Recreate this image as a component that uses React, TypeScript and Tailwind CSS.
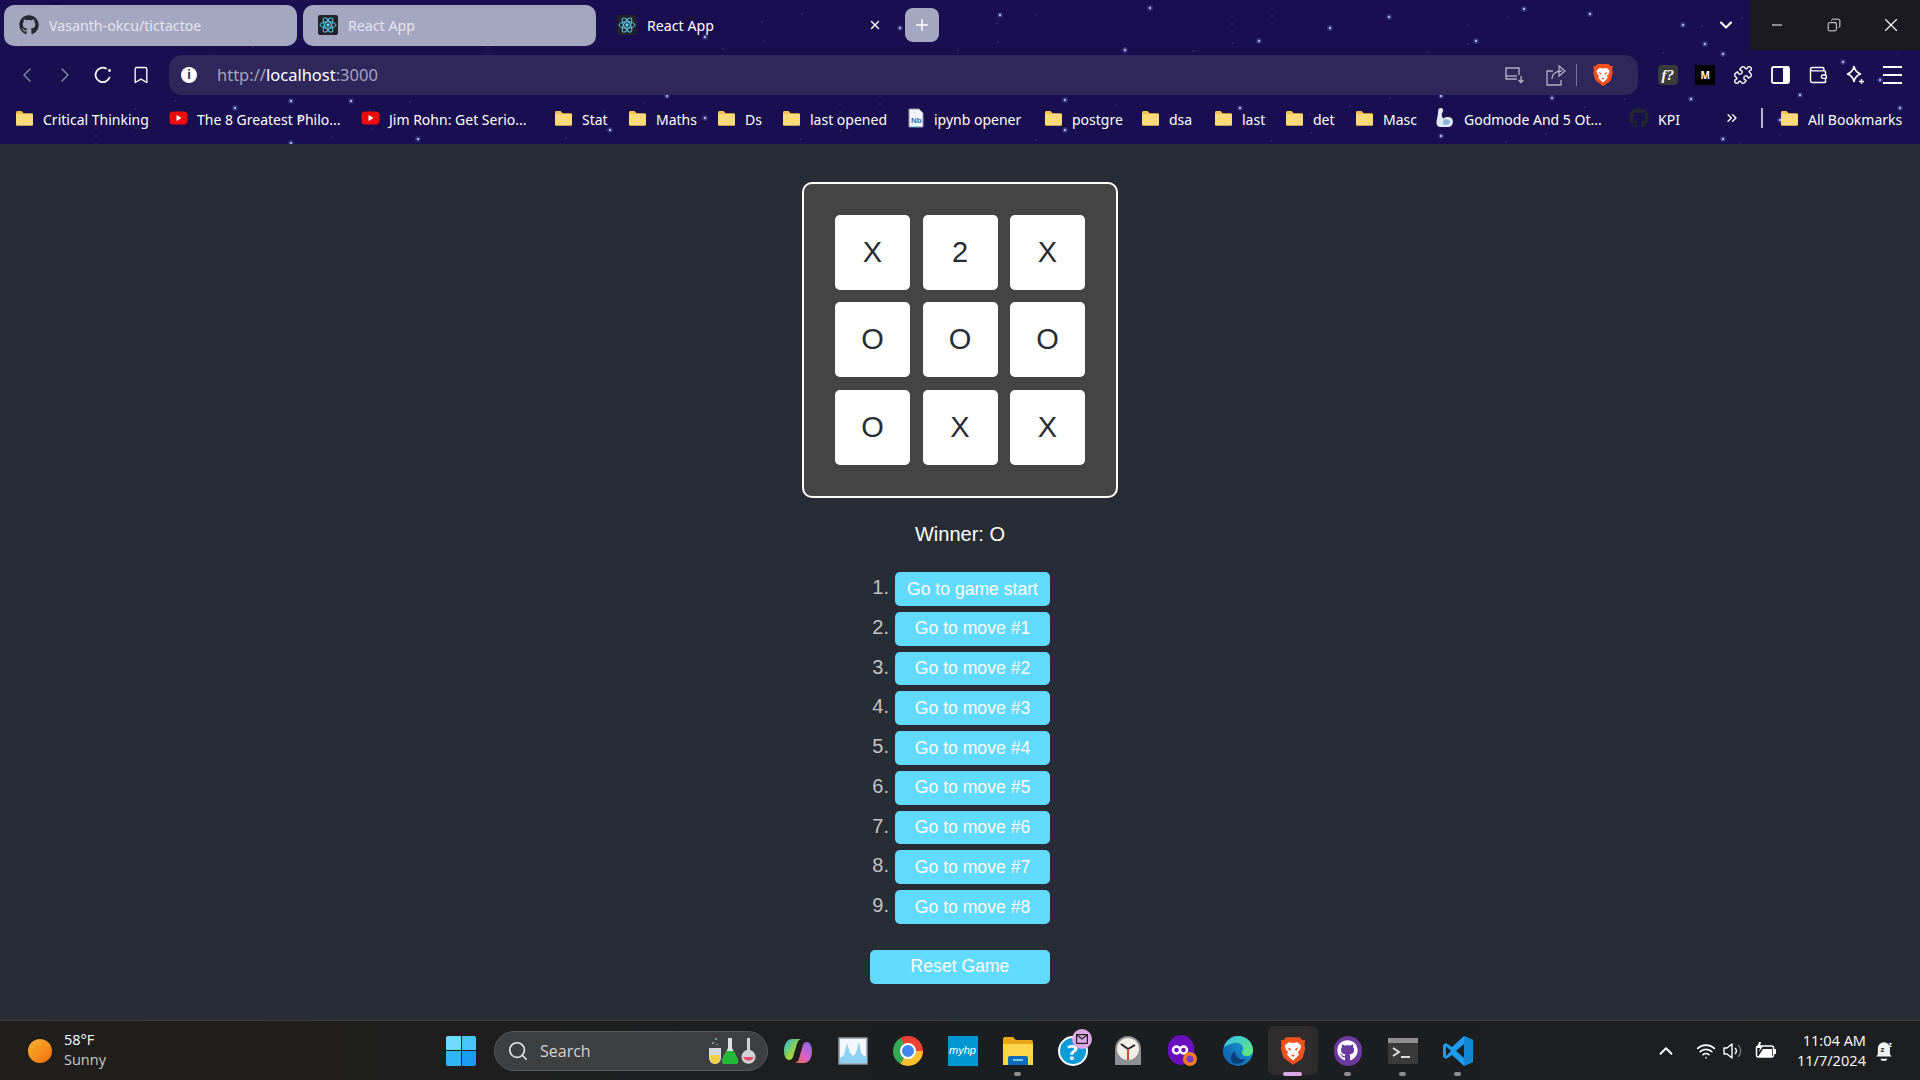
import { Bookmark, ChevronDown, ChevronLeft, ChevronRight, ChevronUp, ChevronsRight, Copy, Minus, Plus, Puzzle, Search, Wallet, Wifi, X } from "lucide-react";
import { FaGithub } from "react-icons/fa";

const BOARD = ["X", "2", "X", "O", "O", "O", "O", "X", "X"];
const MOVES = ["Go to game start", "Go to move #1", "Go to move #2", "Go to move #3", "Go to move #4", "Go to move #5", "Go to move #6", "Go to move #7", "Go to move #8"];

// star field behind the browser chrome
const BRIGHT = [[1389, 17], [1259, 41], [1476, 41], [1125, 50], [1723, 54], [1683, 25], [1524, 9], [351, 101], [291, 143], [291, 101], [418, 139], [485, 20], [705, 37], [705, 118], [667, 96], [1065, 130], [1065, 100], [1441, 96], [1441, 136], [1691, 99], [1723, 139], [1843, 62], [1800, 95], [1880, 80], [1705, 44], [1590, 14], [1150, 8], [900, 28], [1240, 108], [1552, 98], [1780, 120], [1900, 108], [235, 108], [1000, 15], [1330, 28], [610, 130], [300, 118], [1150, 120]];
const FAINT = Array.from({ length: 90 }, (_, i) => [(i * 431 + 97) % 1920, (i * 173 + 11) % 144]);

function Stars() {
  return (
    <svg className="absolute inset-0" width="1920" height="144" viewBox="0 0 1920 144">
      {FAINT.map(([x, y], i) => <circle key={i} cx={x} cy={y} r="0.8" fill="#5f64a0" opacity="0.5" />)}
      {BRIGHT.map(([x, y], i) => (
        <g key={i}>
          <circle cx={x} cy={y} r="3" fill="#6f7ac4" opacity="0.3" />
          <circle cx={x} cy={y} r="1.2" fill="#aeb8e6" />
        </g>
      ))}
    </svg>
  );
}

function ReactIcon({ size = 20 }: { size?: number }) {
  return (
    <svg width={size} height={size} viewBox="0 0 20 20" className="shrink-0">
      <rect width="20" height="20" rx="2" fill="#20232a" />
      <g fill="none" stroke="#61dafb" strokeWidth="0.9">
        <ellipse cx="10" cy="10" rx="8" ry="3.2" />
        <ellipse cx="10" cy="10" rx="8" ry="3.2" transform="rotate(60 10 10)" />
        <ellipse cx="10" cy="10" rx="8" ry="3.2" transform="rotate(120 10 10)" />
      </g>
      <circle cx="10" cy="10" r="1.7" fill="#61dafb" />
    </svg>
  );
}

function Folder() {
  return (
    <svg width="19" height="18" viewBox="0 0 19 18" className="shrink-0">
      <path d="M1 3.5C1 2.7 1.6 2 2.4 2h4.2l2 2.2h8c.8 0 1.4.6 1.4 1.4v9.6c0 .8-.6 1.4-1.4 1.4H2.400C1.600 16.600 1 16 1 15.200z" fill="#f2c14e" />
      <path d="M1 6c0-.6.5-1 1-1h15c.6 0 1 .4 1 1v9.200c0 .8-.6 1.400-1.400 1.400H2.400C1.600 16.600 1 16 1 15.200z" fill="#fbdb79" />
    </svg>
  );
}

function Youtube() {
  return (
    <svg width="19" height="18" viewBox="0 0 19 18" className="shrink-0">
      <rect x="0.5" y="2.5" width="18" height="13" rx="3.5" fill="#f00b0b" />
      <path d="M7.5 6l5 3-5 3z" fill="#fff" />
    </svg>
  );
}

function Notebook() {
  return (
    <svg width="18" height="20" viewBox="0 0 18 20" className="shrink-0">
      <path d="M2 1h10l4 4v14H2z" fill="#f4f6fb" stroke="#8d94ad" />
      <text x="4" y="15" fontSize="8" fontWeight="700" fill="#3a6fb0" fontFamily="Liberation Sans, sans-serif">Nb</text>
    </svg>
  );
}

function ArmIcon() {
  return (
    <svg width="20" height="22" viewBox="0 0 22 24" className="shrink-0">
      <path d="M6 1c2 0 3 1 3 2.500S7.500 6 7.500 8c0 2 .5 3.500 1.500 4.500 2-2 7-2.500 9.500 0 2.500 3 1 8.500-3 9.500H6C2 22 1 18 2 14c.8-3.500 1.500-8 1.500-10C3.500 2 4.500 1 6 1z" fill="#dfe7f2" />
      <path d="M9 14c3-1.500 7-.5 8 2-1 3-5 4-8 3z" fill="#8fb4d9" />
    </svg>
  );
}

function BraveIcon({ size = 24 }: { size?: number }) {
  return (
    <svg width={size} height={size} viewBox="0 0 24 24" className="shrink-0">
      <path d="M6.500 1h11l2 2.300 2.200-.2-.6 4.500.7 1.900-1.600 6.500c-.3 1.200-1 2.200-2 2.900L12 23l-6.200-4.600c-1-.7-1.700-1.700-2-2.900L2.200 9.500l.7-1.900-.6-4.500 2.200.2z" fill="#f4511e" />
      <path d="M12 5.500l3.500-.5 3 2.500-.8 3.500-1.700 1.500.7 2.500-2.200 2.300L12 19.500l-2.500-2.200-2.200-2.300.7-2.500L6.300 11l-.8-3.500 3-2.500z" fill="#fff" />
      <path d="M7.500 9l3 1.300-1 1.700zM16.500 9l-3 1.300 1 1.700z" fill="#f4511e" />
      <path d="M10.300 15h3.400L12 16.800z" fill="#f4511e" />
    </svg>
  );
}

function BookmarkItem({ icon, label, className }: { icon: React.ReactNode; label: string; className: string }) {
  return (
    <div className={`flex shrink-0 items-center gap-[9px] ${className}`}>
      {icon}
      <span className="translate-y-px whitespace-nowrap text-[14px] text-white">{label}</span>
    </div>
  );
}

function Browser() {
  return (
    <header className="relative h-[144px] shrink-0 overflow-hidden bg-[#180e50] font-['Noto_Sans',sans-serif]">
      <Stars />
      <div className="relative flex flex-col">
        {/* tab strip */}
        <div className="flex h-[50px] items-center">
          <div className="ml-[4px] flex h-[41px] w-[293px] items-center gap-[10px] rounded-[10px] bg-[#a5a7c1] pl-[15px]">
            <FaGithub size={20} className="shrink-0 text-[#25282e]" />
            <span className="translate-y-px text-[14.2px] text-[#e4e4ee]">Vasanth-okcu/tictactoe</span>
          </div>
          <div className="ml-[6px] flex h-[41px] w-[293px] items-center gap-[10px] rounded-[10px] bg-[#a5a7c1] pl-[15px]">
            <ReactIcon />
            <span className="translate-y-px text-[14.2px] text-[#e4e4ee]">React App</span>
          </div>
          <div className="ml-[21px] flex w-[265px] items-center gap-[10px]">
            <ReactIcon />
            <span className="translate-y-px text-[14.2px] text-white">React App</span>
            <X size={14} strokeWidth={2.5} className="ml-auto text-white" />
          </div>
          <div className="ml-[23px] flex h-[34px] w-[34px] items-center justify-center rounded-[8px] bg-[#a5a7c1]">
            <Plus size={18} className="text-white" />
          </div>
          <ChevronDown size={20} strokeWidth={2.5} className="ml-auto text-white" />
          <div className="ml-[14px] flex h-[50px] w-[170px] items-center bg-[#1b1a20] text-white">
            <div className="flex w-[54px] justify-center"><Minus size={16} strokeWidth={1.5} /></div>
            <div className="flex w-[59px] justify-center"><Copy size={14} strokeWidth={1.5} className="-scale-x-100" /></div>
            <div className="flex w-[56px] justify-center"><X size={22} strokeWidth={1.2} /></div>
          </div>
        </div>

        {/* address bar */}
        <div className="mt-[5px] flex h-[40px] items-center pl-[8px]">
          <div className="flex w-[38px] justify-center"><ChevronLeft size={24} strokeWidth={1.4} className="text-[#8b8aa8]" /></div>
          <div className="flex w-[38px] justify-center"><ChevronRight size={24} strokeWidth={1.4} className="text-[#8b8aa8]" /></div>
          <div className="flex w-[38px] justify-center">
            <svg width="20" height="20" viewBox="0 0 20 20" fill="none" stroke="#fff" strokeWidth="1.8" strokeLinecap="round">
              <path d="M16.500 12.500A7.200 7.200 0 1 1 13 3.500" />
              <circle cx="16.500" cy="5.500" r="1.400" fill="#fff" stroke="none" />
            </svg>
          </div>
          <div className="flex w-[38px] justify-center"><Bookmark size={20} strokeWidth={1.6} className="text-white" /></div>
          <div className="ml-[9px] flex h-[40px] w-[1469px] items-center rounded-[13px] bg-[#2f2759] pl-[12px] pr-[23px]">
            <div className="flex h-[16px] w-[16px] items-center justify-center rounded-full bg-white">
              <span className="text-[12px] font-bold leading-none text-[#2f2759]">i</span>
            </div>
            <div className="ml-[20px] text-[16.5px] text-[#a6a3c2]">http://<span className="text-white">localhost</span>:3000</div>
            <svg width="22" height="20" viewBox="0 0 22 20" fill="none" stroke="#b0aec6" strokeWidth="1.4" className="ml-auto">
              <path d="M14 14H3V3h13v7" />
              <path d="M3 11h11" />
              <path d="M18 11v6M15.500 15l2.500 2.500 2.500-2.500" />
            </svg>
            <svg width="22" height="22" viewBox="0 0 22 22" fill="none" stroke="#b0aec6" strokeWidth="1.3" className="ml-[20px]">
              <path d="M8 7H2v14h14v-5" />
              <path d="M7 15c0-5 4-8 10-8" />
              <path d="M14 2l6 5-6 5z" />
            </svg>
            <div className="ml-[9px] h-[22px] w-px bg-[#77749a]" />
            <div className="ml-[14px]"><BraveIcon /></div>
          </div>
          <div className="ml-[11px] flex items-center">
            <div className="flex w-[37.5px] justify-center">
              <div className="flex h-[20px] w-[20px] items-center justify-center rounded-[4px] bg-[#3a3a3a] font-['Liberation_Serif',serif] text-[15px] font-bold italic text-white">f?</div>
            </div>
            <div className="flex w-[37.5px] justify-center">
              <div className="flex h-[20px] w-[20px] items-center justify-center bg-black text-[10px] font-bold text-white">M</div>
            </div>
            <div className="flex w-[37.5px] justify-center"><Puzzle size={20} strokeWidth={1.7} className="text-white" /></div>
            <div className="flex w-[37.5px] justify-center">
              <svg width="19" height="18" viewBox="0 0 19 18">
                <rect x="1" y="1" width="17" height="16" rx="1.500" fill="none" stroke="#fff" strokeWidth="1.800" />
                <rect x="12" y="1" width="6" height="16" fill="#fff" />
              </svg>
            </div>
            <div className="flex w-[37.5px] justify-center"><Wallet size={20} strokeWidth={1.7} className="text-white" /></div>
            <div className="flex w-[37.5px] justify-center">
              <svg width="20" height="20" viewBox="0 0 20 20" fill="none" stroke="#fff" strokeWidth="1.600">
                <path d="M9 1.500c.8 3.500 2.500 6 6.500 7.500-4 1.500-5.700 4-6.500 7.500C8.200 13 6.500 10.500 2.500 9 6.500 7.500 8.200 5 9 1.500z" strokeLinejoin="round" />
                <path d="M16.500 14v5M14 16.500h5" strokeWidth="1.300" />
              </svg>
            </div>
            <div className="flex w-[37.5px] justify-center">
              <div className="flex w-[19px] flex-col gap-[6px]">
                <div className="h-[2px] bg-white" /><div className="h-[2px] bg-white" /><div className="h-[2px] bg-white" />
              </div>
            </div>
          </div>
        </div>

        {/* bookmarks */}
        <div className="flex h-[46px] items-center pl-[15px]">
          <BookmarkItem className="w-[154px]" icon={<Folder />} label="Critical Thinking" />
          <BookmarkItem className="w-[192px]" icon={<Youtube />} label="The 8 Greatest Philo..." />
          <BookmarkItem className="w-[193px]" icon={<Youtube />} label="Jim Rohn: Get Serio..." />
          <BookmarkItem className="w-[74px]" icon={<Folder />} label="Stat" />
          <BookmarkItem className="w-[89px]" icon={<Folder />} label="Maths" />
          <BookmarkItem className="w-[65px]" icon={<Folder />} label="Ds" />
          <BookmarkItem className="w-[125px]" icon={<Folder />} label="last opened" />
          <BookmarkItem className="w-[137px]" icon={<Notebook />} label="ipynb opener" />
          <BookmarkItem className="w-[97px]" icon={<Folder />} label="postgre" />
          <BookmarkItem className="w-[73px]" icon={<Folder />} label="dsa" />
          <BookmarkItem className="w-[71px]" icon={<Folder />} label="last" />
          <BookmarkItem className="w-[70px]" icon={<Folder />} label="det" />
          <BookmarkItem className="w-[80px]" icon={<Folder />} label="Masc" />
          <BookmarkItem className="w-[194px]" icon={<ArmIcon />} label="Godmode And 5 Ot..." />
          <BookmarkItem className="w-[95px] gap-[7px]" icon={<FaGithub size={20} className="shrink-0 text-[#24262c]" />} label="KPI" />
          <ChevronsRight size={16} className="shrink-0 text-white" />
          <div className="ml-[21px] h-[20px] w-[2px] shrink-0 bg-[#b9b8d2]" />
          <BookmarkItem className="ml-[17px]" icon={<Folder />} label="All Bookmarks" />
        </div>
      </div>
    </header>
  );
}

function Game() {
  return (
    <main className="flex flex-1 flex-col items-center bg-[#282c34] pt-[38px] font-['Liberation_Sans',sans-serif]">
      <div className="box-border grid h-[316px] w-[316px] grid-cols-[75px_75px_75px] grid-rows-[75px_75px_75px] gap-[12.5px] rounded-[10px] border-2 border-white bg-[#444444] px-[31px] pt-[30.75px]">
        {BOARD.map((v, i) => (
          <div key={i} className="flex items-center justify-center rounded-[5px] bg-white text-[29px] text-[#282c34]">{v}</div>
        ))}
      </div>
      <p className="mt-[25px] text-[20px] leading-[23px] text-white">Winner: O</p>
      <ol className="mt-[26px] flex w-[180px] flex-col gap-[6px]">
        {MOVES.map((m, i) => (
          <li key={m} className="flex gap-[6px]">
            <span className="w-[19px] -translate-y-px text-right text-[20px] leading-[32px] text-[#c4c4c4]">{i + 1}.</span>
            <button className="flex h-[33.75px] w-[155px] items-center justify-center rounded-[5px] bg-[#61dafb] text-[17.6px] text-white">{m}</button>
          </li>
        ))}
      </ol>
      <button className="mt-[26px] flex h-[34px] w-[180px] items-center justify-center rounded-[5px] bg-[#61dafb] pb-[2px] text-[17.6px] text-white">Reset Game</button>
    </main>
  );
}

function Slot({ children, dot }: { children: React.ReactNode; dot?: boolean }) {
  return (
    <div className="relative flex h-[60px] w-[55px] items-center justify-center">
      {children}
      {dot && <div className="absolute bottom-[5px] h-[4px] w-[7px] rounded-full bg-[#8e8e8e]" />}
    </div>
  );
}

function Taskbar() {
  return (
    <footer className="flex h-[60px] shrink-0 items-center border-t border-[#3a3b3d] bg-gradient-to-r from-[#211e1c] via-[#1b1e20] to-[#1c1e20] font-['Open_Sans',sans-serif] text-white">
      <div className="flex w-[446px] items-center pl-[28px]">
        <div className="h-[24px] w-[24px] rounded-full bg-gradient-to-br from-[#f5b52c] to-[#f36a0a]" />
        <div className="ml-[12px] -translate-y-px text-[14.5px] leading-[20px]">
          <div>58°F</div>
          <div className="text-[#c9c9c9]">Sunny</div>
        </div>
      </div>
      <div className="grid h-[30px] w-[30px] grid-cols-2 gap-[1px]">
        <div className="rounded-tl-[2px] bg-[#6fdcfd]" /><div className="rounded-tr-[2px] bg-[#48c6fb]" />
        <div className="rounded-bl-[2px] bg-[#30b5f8]" /><div className="rounded-br-[2px] bg-[#1a9cf1]" />
      </div>
      <div className="ml-[18px] flex h-[40px] w-[274px] items-center rounded-full border border-[#555] bg-[#3d3f40] pl-[12px] pr-[11px]">
        <Search size={22} strokeWidth={1.8} className="text-[#e6e6e6]" />
        <span className="ml-[11px] text-[16px] text-[#d4d4d4]">Search</span>
        <svg width="48" height="28" viewBox="0 0 48 28" className="ml-auto">
          <path d="M8 1v2M5 5v2M9 7v1" stroke="#9fd0e6" strokeWidth="1.200" />
          <path d="M1 11h12v10a6 6 0 0 1-12 0z" fill="#d7d9dc" /><path d="M2 18h10v4a5 5 0 0 1-10 0z" fill="#f2cf45" />
          <path d="M20 1h4v10l6 12a3 3 0 0 1-3 4H17a3 3 0 0 1-3-4l6-12z" fill="#dcdfe0" /><path d="M18 14h8l4 9a3 3 0 0 1-3 4H17a3 3 0 0 1-3-4z" fill="#22b83a" />
          <path d="M39 1h3v12a7 7 0 1 1-3 0z" fill="#cfd3d6" /><path d="M35 20a6 6 0 0 0 11 0z" fill="#ef4a6b" />
        </svg>
      </div>
      <div className="ml-[2px] flex">
        <Slot>
          <svg width="30" height="30" viewBox="0 0 30 30">
            <defs>
              <linearGradient id="cp1" x1="0" y1="0" x2="1" y2="1"><stop offset="0" stopColor="#1fb6e8" /><stop offset="0.5" stopColor="#8fd14f" /><stop offset="1" stopColor="#f6c63b" /></linearGradient>
              <linearGradient id="cp2" x1="1" y1="0" x2="0" y2="1"><stop offset="0" stopColor="#7a6be8" /><stop offset="0.5" stopColor="#d45fd0" /><stop offset="1" stopColor="#f0703c" /></linearGradient>
            </defs>
            <path d="M9 3h9c-3 1-4 4-5 8l-3 10c-.700 2-2 3-4 3-3 0-5-4-5-9C1 8 4 3 9 3z" fill="url(#cp1)" />
            <path d="M21 27h-9c3-1 4-4 5-8l3-10c.700-2 2-3 4-3 3 0 5 4 5 9 0 7-3 12-8 12z" fill="url(#cp2)" />
          </svg>
        </Slot>
        <Slot>
          <svg width="30" height="28" viewBox="0 0 30 28">
            <rect x="1" y="1" width="28" height="26" fill="#f2f8fc" stroke="#8a97a6" strokeWidth="1.500" />
            <path d="M2 26V21l4-3 3-12 3 10 3 3 3-3 3-11 2 11 3 3 3 1v6z" fill="#8fd0f5" />
          </svg>
        </Slot>
        <Slot>
          <div className="h-[30px] w-[30px] rounded-full bg-[conic-gradient(from_-30deg,#ea4335_0_120deg,#fbc02d_120deg_240deg,#34a853_240deg_360deg)] p-[7px]">
            <div className="h-full w-full rounded-full border-[2px] border-white bg-[#3f86ee]" />
          </div>
        </Slot>
        <Slot>
          <div className="flex h-[30px] w-[30px] items-center justify-center bg-[#0096d6] font-['Liberation_Sans',sans-serif] text-[11px] italic text-white">myhp</div>
        </Slot>
        <Slot dot>
          <svg width="30" height="28" viewBox="0 0 30 28">
            <path d="M0 2a2 2 0 0 1 2-2h8l3 3h15a2 2 0 0 1 2 2v4H0z" fill="#e8a817" />
            <path d="M0 7h30v21H0z" fill="#ffd54a" />
            <path d="M5 28V21a2 2 0 0 1 2-2h16a2 2 0 0 1 2 2v7z" fill="#0f6cbd" />
            <path d="M10 23h10" stroke="#7fc4ef" strokeWidth="2" />
          </svg>
        </Slot>
        <Slot>
          <div className="relative flex h-[30px] w-[30px] items-center justify-center rounded-full border-[2px] border-white bg-[#0f9bd8] text-[22px] font-bold leading-none text-white">
            ?
            <div className="absolute -right-[6px] -top-[9px] flex h-[20px] w-[20px] items-center justify-center rounded-full bg-[#dba8e4]">
              <svg width="12" height="10" viewBox="0 0 12 10" fill="none" stroke="#222" strokeWidth="1.200"><rect x="0.600" y="0.600" width="10.800" height="8.800" /><path d="M1 1l5 4 5-4" /></svg>
            </div>
          </div>
        </Slot>
        <Slot>
          <svg width="30" height="32" viewBox="0 0 30 32">
            <path d="M2 30V14a13 13 0 0 1 26 0v16z" fill="#8c8f93" />
            <circle cx="15" cy="14" r="11" fill="#f2f0e6" />
            <path d="M15 14L8 9M15 14l7-4" stroke="#222" strokeWidth="2" />
            <path d="M15 14v11" stroke="#d8452e" strokeWidth="2" />
          </svg>
        </Slot>
        <Slot>
          <svg width="30" height="32" viewBox="0 0 30 32">
            <ellipse cx="13" cy="15" rx="13.500" ry="15" fill="#6a0fc0" />
            <path d="M5 15a3.500 3.500 0 0 1 7 0 3.500 3.500 0 0 1 7 0 3.500 3.500 0 0 1-7 0 3.500 3.500 0 0 1-7 0z" fill="none" stroke="#fff" strokeWidth="2.500" />
            <circle cx="22" cy="24" r="7" fill="#f57c22" /><circle cx="22" cy="24" r="3.500" fill="#7b3fc4" />
          </svg>
        </Slot>
        <Slot>
          <svg width="30" height="30" viewBox="0 0 30 30">
            <defs>
              <linearGradient id="ed1" x1="0" y1="1" x2="1" y2="0"><stop offset="0" stopColor="#0c59a4" /><stop offset="1" stopColor="#1fa4dc" /></linearGradient>
              <linearGradient id="ed2" x1="0" y1="0" x2="1" y2="1"><stop offset="0" stopColor="#35c1f1" /><stop offset="1" stopColor="#66eb6e" /></linearGradient>
            </defs>
            <circle cx="15" cy="15" r="15" fill="url(#ed1)" />
            <path d="M1 11C3 4 9 0 15 0c8 0 15 6 15 14 0 4-3 6-6 6-3 0-5-1-5-3 0-3 2-3 1-6-1-3-5-5-9-4-4 1-7 2-10 4z" fill="url(#ed2)" />
            <path d="M12 15c0 6 5 10 11 8-3 4-8 6-13 4-3-3-3-9 2-12z" fill="#0a3f7a" />
          </svg>
        </Slot>
        <div className="relative flex h-[60px] w-[55px] items-center justify-center">
          <div className="absolute right-[2px] top-[5px] h-[49px] w-[44px] rounded-[6px] bg-[#2b2a2b]" />
          <div className="absolute left-[3px] top-[5px] h-[49px] w-[44px] rounded-[6px] bg-[#302c2d]" />
          <div className="relative"><BraveIcon size={30} /></div>
          <div className="absolute bottom-[5px] h-[4px] w-[19px] rounded-full bg-[#dba8e4]" />
        </div>
        <Slot dot>
          <div className="flex h-[30px] w-[28px] items-center justify-center rounded-full bg-[#6b3a9e] text-white"><FaGithub size={21} /></div>
        </Slot>
        <Slot dot>
          <svg width="30" height="26" viewBox="0 0 30 26">
            <rect width="30" height="26" rx="2" fill="#3a3a3a" />
            <rect width="30" height="5" fill="#8f8f8f" />
            <path d="M5 10l6 4-6 4" fill="none" stroke="#ddd" strokeWidth="2" />
            <path d="M13 19h9" stroke="#ddd" strokeWidth="2" />
          </svg>
        </Slot>
        <Slot dot>
          <svg width="30" height="30" viewBox="0 0 30 30">
            <path d="M21 0l9 4v22l-9 4-12-11-6 4-3-2v-12l3-2 6 4z" fill="#1f9cf0" />
            <path d="M21 0l9 4v22l-9 4z" fill="#1585d6" />
            <path d="M21 8l-8 7 8 7z" fill="#1c1e20" />
            <path d="M3 10l5 5-5 5z" fill="#1c1e20" />
          </svg>
        </Slot>
      </div>
      <ChevronUp size={22} strokeWidth={2} className="ml-[170px] text-white" />
      <Wifi size={20} strokeWidth={2} className="ml-[19px] text-white" />
      <svg width="22" height="20" viewBox="0 0 22 20" fill="none" strokeWidth="1.400" className="ml-[7px]">
        <path d="M1 7v6h3l5 4V3L4 7z" stroke="#fff" strokeLinejoin="round" />
        <path d="M12 7a4 4 0 0 1 0 6" stroke="#fff" />
        <path d="M15 4a8 8 0 0 1 0 12" stroke="#777" />
      </svg>
      <svg width="22" height="18" viewBox="0 0 22 18" fill="none" className="ml-[10px]">
        <rect x="1.500" y="4" width="17" height="11" rx="2" stroke="#fff" strokeWidth="1.500" />
        <rect x="19" y="7" width="2" height="5" fill="#fff" />
        <path d="M3 15l5-8h9v8z" fill="#fff" />
        <path d="M4 0L2 6h3l-1 4 4-6H5l1-4z" fill="#fff" />
      </svg>
      <div className="ml-auto w-[80px] -translate-y-px text-right text-[14.6px] leading-[20px]">
        <div>11:04 AM</div>
        <div>11/7/2024</div>
      </div>
      <svg width="20" height="22" viewBox="0 0 18 20" className="ml-[9px] mr-[25px]">
        <path d="M8 2a5.500 5.500 0 0 1 5.500 5.500V13L15 15H1l1.500-2V7.500A5.500 5.500 0 0 1 8 2z" fill="#f2f2f2" />
        <path d="M5 17h6a3 2 0 0 1-6 0z" fill="#f2f2f2" />
        <text x="5" y="11" fontSize="7" fontWeight="700" fill="#1c1e20" fontFamily="Liberation Sans, sans-serif">z</text>
        <text x="12" y="6" fontSize="7" fontWeight="700" fill="#f2f2f2" fontFamily="Liberation Sans, sans-serif">z</text>
      </svg>
    </footer>
  );
}

export default function App() {
  return (
    <div className="flex h-screen w-full flex-col overflow-hidden">
      <Browser />
      <Game />
      <Taskbar />
    </div>
  );
}
